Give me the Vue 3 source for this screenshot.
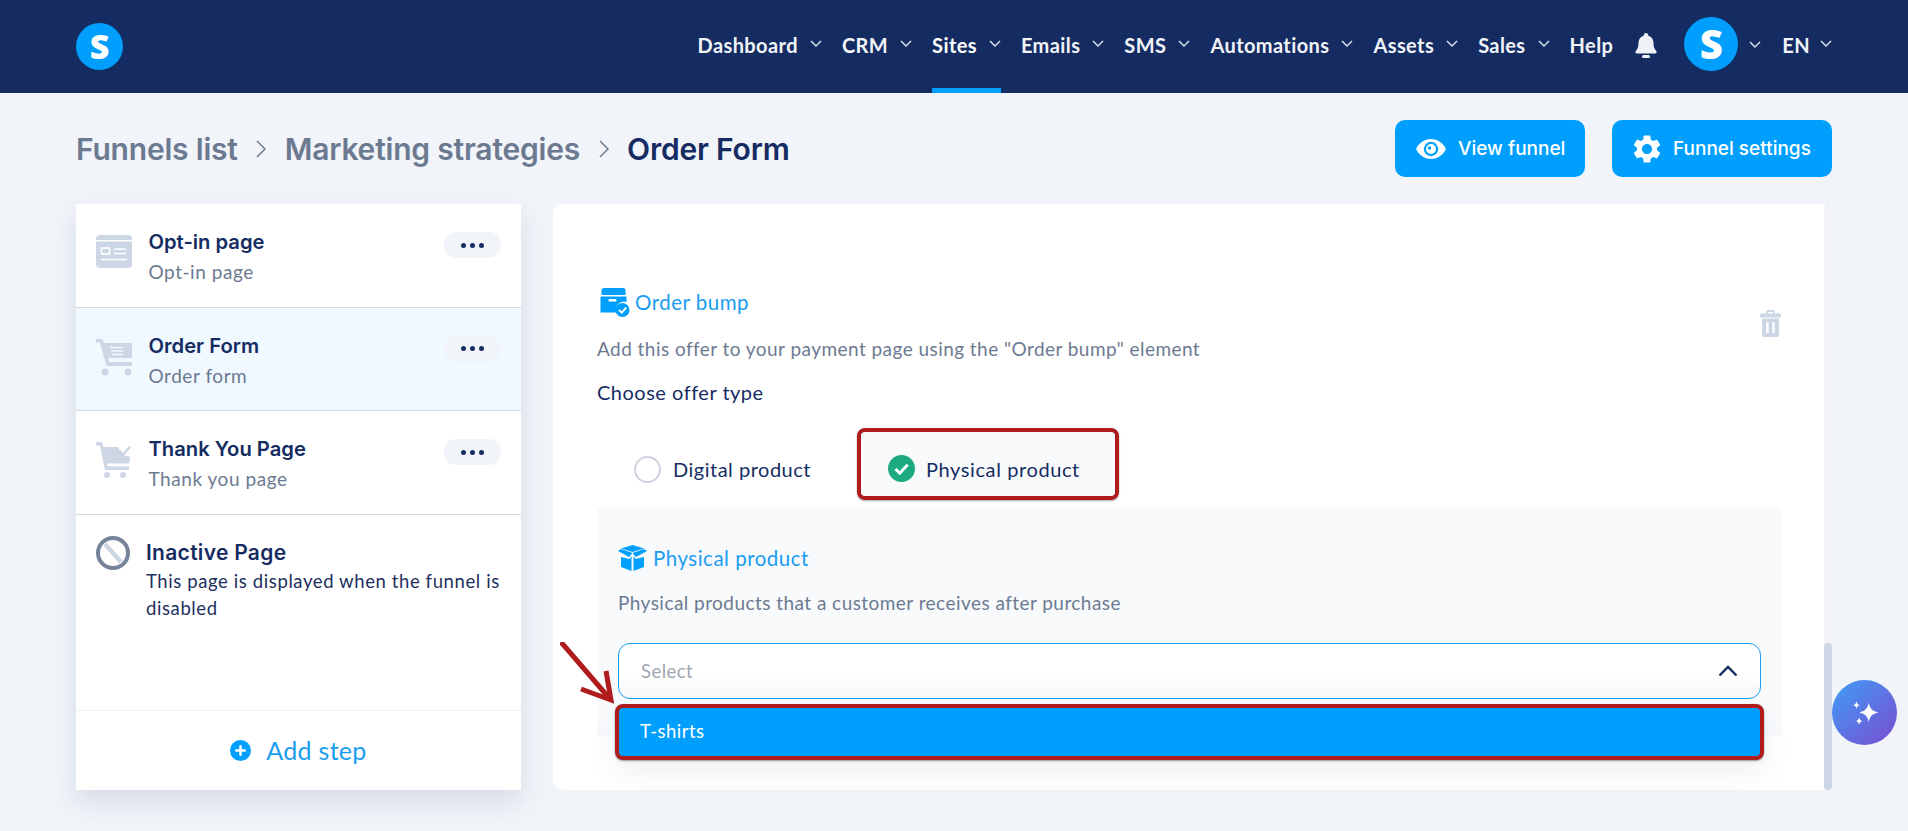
<template>
  <div class="app-shell">
    <header class="topbar">
      <div class="logo">S</div>
      <nav class="nav">
        <a v-for="item in navItems" :key="item.label" class="nav-item" :class="{ active: item.active }">
          <span>{{ item.label }}</span>
          <svg v-if="item.caret" class="caret" viewBox="0 0 12 7"><path d="M1 1l5 5 5-5" /></svg>
        </a>
        <svg class="bell" viewBox="0 0 22 25">
          <path d="M11 0c1.3 0 2.3 1 2.3 2.2v.5c3.300.9 5.200 3.600 5.200 7.100 0 4.400 1 6.400 2.700 8.100.8.9.4 2.600-1.100 2.600H1.900C.4 20.500 0 18.800.8 17.900 2.500 16.200 3.500 14.200 3.500 9.800c0-3.500 1.900-6.200 5.200-7.100v-.5C8.700 1 9.700 0 11 0z" />
          <rect x="7" y="22" width="8" height="3" rx="1.500" />
        </svg>
        <div class="avatar">S</div>
        <svg class="caret avatar-caret" viewBox="0 0 12 7"><path d="M1 1l5 5 5-5" /></svg>
        <a class="nav-item lang">
          <span>EN</span>
          <svg class="caret" viewBox="0 0 12 7"><path d="M1 1l5 5 5-5" /></svg>
        </a>
      </nav>
    </header>

    <main class="page">
      <div class="page-head">
        <div class="crumbs">
          <span class="crumb">Funnels list</span>
          <svg class="crumb-sep" viewBox="0 0 10 18"><path d="M1 1l8 8-8 8" /></svg>
          <span class="crumb">Marketing strategies</span>
          <svg class="crumb-sep" viewBox="0 0 10 18"><path d="M1 1l8 8-8 8" /></svg>
          <span class="crumb current">Order Form</span>
        </div>
        <div class="head-actions">
          <button class="btn-primary view-btn">
            <svg class="eye-icon" viewBox="0 0 30 20">
              <path fill-rule="evenodd" d="M15 0c6.500 0 11.800 4 14.600 9.200.3.500.3 1.100 0 1.600C26.800 16 21.500 20 15 20S3.200 16 .4 10.800c-.3-.5-.3-1.100 0-1.600C3.200 4 8.500 0 15 0zm0 2.800a7.200 7.200 0 1 0 0 14.400 7.200 7.200 0 0 0 0-14.400z" />
              <path fill-rule="evenodd" d="M15 5a5 5 0 1 1 0 10 5 5 0 0 1 0-10zm-1.500 2.200a1.800 1.800 0 1 0 0 3.600 1.800 1.800 0 0 0 0-3.600z" />
            </svg>
            View funnel
          </button>
          <button class="btn-primary settings-btn">
            <svg class="gear-icon" viewBox="2 2 20 20">
              <path d="M19.140 12.940c.04-.3.06-.61.06-.94 0-.32-.02-.64-.07-.94l2.030-1.580a.49.49 0 0 0 .12-.61l-1.920-3.320a.488.488 0 0 0-.59-.22l-2.390.96c-.5-.38-1.030-.7-1.620-.94l-.36-2.540a.484.484 0 0 0-.48-.41h-3.840c-.24 0-.43.17-.47.41l-.36 2.540c-.59.24-1.130.57-1.620.94l-2.390-.96c-.22-.08-.47 0-.59.22L2.740 8.870c-.12.21-.08.47.12.61l2.030 1.580c-.05.3-.09.63-.09.94s.02.64.07.94l-2.030 1.580a.49.49 0 0 0-.12.61l1.920 3.320c.12.22.37.29.59.22l2.390-.96c.5.38 1.030.7 1.620.94l.36 2.540c.05.24.24.41.48.41h3.840c.24 0 .44-.17.47-.41l.36-2.540c.59-.24 1.130-.56 1.620-.94l2.390.96c.22.08.47 0 .59-.22l1.920-3.320c.12-.22.07-.47-.12-.61l-2.010-1.580zM12 15.600c-1.980 0-3.600-1.620-3.600-3.600s1.620-3.600 3.600-3.600 3.600 1.620 3.600 3.600-1.620 3.600-3.600 3.600z" />
            </svg>
            Funnel settings
          </button>
        </div>
      </div>

      <div class="workspace">
        <aside class="sidebar">
          <div class="steps">
            <div v-for="step in steps" :key="step.title" class="step" :class="{ selected: step.selected }">
              <div class="step-icon">
                <svg v-if="step.icon === 'page'" viewBox="0 0 36 33">
                  <rect width="36" height="33" rx="4" fill="#cdd6e4" />
                  <rect y="5" width="36" height="1.500" fill="#fff" />
                  <rect x="5.500" y="13" width="8" height="6" fill="none" stroke="#fff" stroke-width="1.500" />
                  <path d="M18 14h12M18 18.500h12M5 24.500h26" stroke="#fff" stroke-width="1.500" />
                </svg>
                <svg v-else-if="step.icon === 'cart'" viewBox="0 0 36 37">
                  <path d="M0 0h6.500l1.200 4H36v15H12.500l1 4H36v4H10.500L4 3.500H0z" fill="#cdd6e4" />
                  <path d="M14 8.500h13M15 12h12M16 15.500h11" stroke="#f0f9ff" stroke-width="1.500" />
                  <circle cx="9" cy="33" r="3.500" fill="#cdd6e4" />
                  <circle cx="32" cy="33" r="3.500" fill="#cdd6e4" />
                </svg>
                <svg v-else viewBox="0 0 36 37">
                  <path d="M0 0h6l1.500 5h15c1 6 5 9.500 12 9.500l-1.500 7H11l1 3h21v3.500H9L4 3.500H0z" fill="#cdd6e4" />
                  <path d="M23 8.500l4 4 7.500-8" fill="none" stroke="#cdd6e4" stroke-width="2.500" />
                  <circle cx="11" cy="33" r="3" fill="#cdd6e4" />
                  <circle cx="27" cy="33" r="3" fill="#cdd6e4" />
                </svg>
              </div>
              <div class="step-text">
                <div class="step-title">{{ step.title }}</div>
                <div class="step-sub">{{ step.sub }}</div>
              </div>
              <button class="step-menu"><i></i><i></i><i></i></button>
            </div>
            <div class="step inactive">
              <svg class="inactive-icon" viewBox="0 0 34 34">
                <path d="M9 8l16 18" stroke="#cdd6e4" stroke-width="4.500" />
                <circle cx="17" cy="17" r="15" fill="none" stroke="#76849b" stroke-width="4" />
              </svg>
              <div class="step-text">
                <div class="step-title">Inactive Page</div>
                <div class="inactive-desc">This page is displayed when the funnel is disabled</div>
              </div>
            </div>
          </div>
          <div class="add-step">
            <svg class="plus-icon" viewBox="0 0 22 22">
              <circle cx="11" cy="11" r="11" fill="#019ffd" />
              <path d="M11 6.500v9M6.500 11h9" stroke="#fff" stroke-width="2.600" stroke-linecap="round" />
            </svg>
            <span>Add step</span>
          </div>
        </aside>

        <section class="panel">
          <div class="panel-scroll">
            <div class="offer-head">
              <svg class="bump-icon" viewBox="0 0 29 29">
                <path d="M1 2.500A2.500 2.500 0 0 1 3.500 0h19A2.500 2.500 0 0 1 25 2.500V7H1z" fill="#019ffd" />
                <path d="M0 8.500h26V14a8 8 0 0 0-10 10.500H0z" fill="#019ffd" />
                <rect x="8" y="11" width="8" height="2.500" rx="1" fill="#fff" />
                <circle cx="22" cy="22" r="7" fill="#019ffd" />
                <path d="M18.500 22l2.700 2.600 4.400-5" fill="none" stroke="#fff" stroke-width="2" />
              </svg>
              <span class="section-title">Order bump</span>
              <svg class="trash-icon" viewBox="0 0 21 27">
                <path d="M7 3.500V2a1 1 0 0 1 1-1h5a1 1 0 0 1 1 1v1.500" fill="none" stroke="#cdd6e4" stroke-width="1.800" />
                <rect y="3.500" width="21" height="4" rx="1" fill="#cdd6e4" />
                <path d="M2 8.500h17V25a2 2 0 0 1-2 2H4a2 2 0 0 1-2-2z" fill="#cdd6e4" />
                <path d="M7.500 12v11M13.500 12v11" stroke="#fff" stroke-width="2.200" />
              </svg>
            </div>
            <p class="hint offer-hint">Add this offer to your payment page using the "Order bump" element</p>
            <p class="offer-label">Choose offer type</p>

            <div class="offer-types">
              <label class="offer-type digital">
                <span class="radio"></span>
                Digital product
              </label>
              <label class="offer-type physical">
                <svg class="radio-check" viewBox="0 0 27 27">
                  <circle cx="13.500" cy="13.500" r="13.500" fill="#1bab7e" />
                  <path d="M7.500 14l4.200 4.200 8-8.400" fill="none" stroke="#fff" stroke-width="3" />
                </svg>
                Physical product
              </label>
            </div>

            <div class="product-box">
              <div class="product-head">
                <svg class="box-icon" viewBox="0 0 29 26">
                  <path d="M14.500 0L26 3.500 14.500 7 3 3.500z" fill="#019ffd" />
                  <path d="M0 6l3-2 11.500 4L11 12z M29 6l-3-2-11.500 4L18 12z" fill="#019ffd" />
                  <path d="M3 12l8.500 2 2-3v15L3 22z M26 12l-8.500 2-2-3v15L26 22z" fill="#019ffd" />
                </svg>
                <span class="section-title">Physical product</span>
              </div>
              <p class="hint product-hint">Physical products that a customer receives after purchase</p>

              <div class="select-wrap">
                <div class="select-box">
                  <span>Select</span>
                  <svg class="select-caret" viewBox="0 0 20 12"><path d="M1.500 10.500L10 2l8.500 8.500" /></svg>
                </div>
                <div class="select-option">T-shirts</div>
                <svg class="arrow" viewBox="0 0 56 64">
                  <path d="M1 0l49 57" />
                  <path d="M21 47l30 11-5-29" />
                </svg>
              </div>
            </div>
          </div>
          <div class="scrollbar"><div class="thumb"></div></div>
        </section>

        <button class="assist">
          <svg viewBox="0 0 30 30">
            <path d="M18.500 5.500c1 5.500 3.500 8 9 9-5.500 1-8 3.500-9 9-1-5.500-3.500-8-9-9 5.500-1 8-3.500 9-9z" />
            <path d="M7 4c.4 2.300 1.300 3.200 3.600 3.600C8.300 8 7.400 8.900 7 11.200c-.4-2.300-1.300-3.200-3.600-3.600C5.700 7.200 6.600 6.300 7 4z" />
            <path d="M9.500 19c.4 2.300 1.300 3.200 3.600 3.600-2.300.4-3.200 1.300-3.600 3.600-.4-2.300-1.300-3.200-3.600-3.600 2.300-.4 3.200-1.300 3.600-3.600z" />
          </svg>
        </button>
      </div>
    </main>
  </div>
</template>

<script setup>
const navItems = [
  { label: 'Dashboard', caret: true },
  { label: 'CRM', caret: true },
  { label: 'Sites', caret: true, active: true },
  { label: 'Emails', caret: true },
  { label: 'SMS', caret: true },
  { label: 'Automations', caret: true },
  { label: 'Assets', caret: true },
  { label: 'Sales', caret: true },
  { label: 'Help', caret: false }
]

const steps = [
  { title: 'Opt-in page', sub: 'Opt-in page', icon: 'page' },
  { title: 'Order Form', sub: 'Order form', icon: 'cart', selected: true },
  { title: 'Thank You Page', sub: 'Thank you page', icon: 'thanks' }
]
</script>

<style>
html, body { margin: 0; background: #f1f4f9; overflow: hidden; }
</style>

<style scoped>
.app-shell { height: 831px; background: #f1f4f9; font-family: Lato, "Open Sans", sans-serif; color: #152c63; }
.topbar { height: 93px; background: #152c63; display: flex; align-items: center; justify-content: space-between; padding: 0 76px; box-sizing: border-box; }
.logo { width: 47px; height: 47px; border-radius: 50%; background: #019ffd; color: #fff; font: 800 34px/47px "Open Sans", sans-serif; text-align: center; }
.nav { display: flex; align-items: center; height: 93px; }
.nav-item { display: flex; align-items: center; gap: 12px; height: 93px; box-sizing: border-box; margin-right: 20px; padding-bottom: 3px; color: #f1f4f9; font-weight: 700; font-size: 20px; letter-spacing: 0.4px; position: relative; }
.nav-item.active { color: #fff; }
.nav-item.active::after { content: ""; position: absolute; left: 0; right: 0; bottom: 0; height: 5px; background: #019ffd; }
.caret { width: 12px; height: 7px; fill: none; stroke: #dfe6f0; stroke-width: 1.400; margin-top: -3px; }
.avatar-caret { margin-left: 11px; margin-right: 21px; margin-top: -5px; }
.bell { width: 22px; height: 25px; fill: #eef1f6; margin-left: 2px; margin-right: 27px; margin-top: -3px; }
.avatar { width: 54px; height: 54px; border-radius: 50%; background: #019ffd; color: #fff; font: 800 40px/54px "Open Sans", sans-serif; text-align: center; margin-top: -5px; }
.nav-item.lang { margin-right: 0; gap: 10px; }

.page { padding: 0 76px; position: relative; }
.page-head { height: 111px; display: flex; align-items: center; justify-content: space-between; box-sizing: border-box; }
.crumbs { display: flex; align-items: center; font-family: Inter, sans-serif; font-size: 30px; font-weight: 600; color: #6c7a91; letter-spacing: -0.2px; }
.crumb.current { color: #152c63; }
.crumb-sep { width: 10px; height: 18px; fill: none; stroke: #6c7a91; stroke-width: 1.500; margin: 0 18.500px; }
.head-actions { display: flex; gap: 27px; }
.btn-primary { height: 57px; border: none; border-radius: 10px; background: #019ffd; color: #fff; font-family: Inter, sans-serif; font-size: 19px; font-weight: 500; display: flex; align-items: center; padding: 0 0 0 21px; white-space: nowrap; }
.view-btn { width: 190px; gap: 12px; }
.settings-btn { width: 220px; gap: 12px; }
.eye-icon { width: 30px; height: 20px; fill: #fff; flex: none; }
.gear-icon { width: 28px; height: 28px; fill: #fff; flex: none; }

.workspace { display: grid; grid-template-columns: 445px 1fr; gap: 32px; height: 586px; }
.sidebar { background: #fff; display: flex; flex-direction: column; box-shadow: 0 12px 24px rgba(60, 75, 110, 0.14); }
.steps { flex: 1; }
.step { height: 103.600px; box-sizing: border-box; border-bottom: 1.500px solid #d3d9e2; padding: 26px 20px 0; display: flex; }
.step.selected { background: #f0f9ff; }
.step-icon { width: 36px; margin-right: 16.500px; padding-top: 5px; flex: none; }
.step-icon svg { display: block; width: 36px; }
.step-text { flex: 1; }
.step-title { font-family: Inter, sans-serif; font-size: 20.200px; font-weight: 600; line-height: 24px; color: #152c63; }
.step-sub { font-size: 19px; line-height: 24px; margin-top: 6px; color: #6c7a91; letter-spacing: 0.55px; }
.step-menu { width: 57px; height: 26px; border: none; border-radius: 12px; background: #f1f4f9; display: flex; align-items: center; justify-content: center; gap: 4px; padding: 0; margin-top: 2px; }
.step-menu i { width: 5px; height: 5px; border-radius: 50%; background: #152c63; }
.step.inactive { border-bottom: none; padding-top: 21px; height: auto; }
.inactive-icon { width: 34px; height: 34px; flex: none; margin-right: 17px; }
.step.inactive .step-title { margin-top: 5.500px; margin-left: -1px; font-size: 21px; letter-spacing: 0.3px; }
.inactive-desc { font-size: 18.500px; line-height: 27px; color: #1d2f5f; letter-spacing: 0.6px; margin-top: 3px; margin-left: -1px; }
.add-step { height: 80px; flex: none; border-top: 1px solid #eef1f5; box-sizing: border-box; display: flex; align-items: center; justify-content: center; gap: 15px; color: #1a9df0; font-size: 25px; letter-spacing: 0.3px; padding-bottom: 1px; }
.plus-icon { width: 21px; height: 21px; }

.panel { background: #fff; border-radius: 10px 0 10px 10px; display: flex; overflow: visible; }
.panel-scroll { flex: 1; padding: 84px 42px 0 44px; position: relative; min-width: 0; }
.scrollbar { width: 8px; background: #f1f3f7; border-radius: 4px; display: flex; flex-direction: column; flex: none; }
.thumb { margin-top: auto; height: 147px; background: #cdd6e4; border-radius: 4px; }
.offer-head { display: flex; align-items: center; height: 28px; padding-left: 3px; gap: 5px; position: relative; }
.bump-icon { width: 30px; height: 29px; flex: none; }
.section-title { color: #1a9df0; font-size: 20.500px; letter-spacing: 0.5px; }
.trash-icon { width: 21px; height: 27px; position: absolute; right: 1px; top: 22px; }
.hint { margin: 0; font-size: 19px; color: #6c7a91; letter-spacing: 0.45px; line-height: 24px; }
.offer-hint { margin-top: 21px; }
.offer-label { margin: 19px 0 0; font-size: 20px; line-height: 24px; color: #152c63; letter-spacing: 0.5px; }
.offer-types { display: flex; margin-top: 24px; }
.offer-type { display: flex; align-items: center; gap: 12px; height: 72px; box-sizing: border-box; padding-top: 10px; font-size: 20px; letter-spacing: 0.5px; color: #152c63; }
.offer-type.digital { padding-left: 37px; width: 260px; }
.offer-type.physical { width: 262px; padding-left: 27px; padding-top: 9px; gap: 11px; letter-spacing: 0.6px; border: 4px solid #b01c1c; border-radius: 8px; background: #f8fafc; box-shadow: 0 1px 2px rgba(0,0,0,.35); }
.radio { width: 27px; height: 27px; box-sizing: border-box; border: 2px solid #cdd3de; border-radius: 50%; background: #fff; }
.radio-check { width: 27px; height: 27px; }
.product-box { background: #f8fafc; height: 230px; margin-top: 7px; padding: 38px 21px 0; box-sizing: border-box; }
.product-head { display: flex; align-items: center; gap: 6px; height: 26px; }
.box-icon { width: 29px; height: 26px; flex: none; }
.product-hint { margin-top: 20px; }
.select-wrap { position: relative; margin-top: 28px; }
.select-box { height: 56px; box-sizing: border-box; border: 1px solid #1a9df0; border-radius: 12px; background: linear-gradient(#fff 55%, #f6f7f9); display: flex; align-items: center; justify-content: space-between; padding: 0 22px 1px; font-size: 18.500px; letter-spacing: 0.45px; color: #a0a6b0; }
.select-caret { width: 20px; height: 12px; fill: none; stroke: #152c63; stroke-width: 2.400; }
.select-option { position: absolute; left: -3px; right: -3px; top: 61px; height: 56px; box-sizing: border-box; border: 4px solid #b01c1c; border-radius: 8px; background: #019ffd; color: #fff; font-size: 18.500px; letter-spacing: 0.45px; line-height: 46px; padding-left: 21px; box-shadow: 0 1px 2px rgba(0,0,0,.4), 0 14px 28px rgba(60, 75, 110, 0.08); }
.arrow { position: absolute; left: -58px; top: -1px; width: 56px; height: 64px; fill: none; stroke: #b01c1c; stroke-width: 5; }
.assist { position: absolute; left: 1832px; top: 587px; width: 65px; height: 65px; padding: 0; border: none; border-radius: 50%; background: linear-gradient(135deg, #3f9ef7, #7a4ccf); display: flex; align-items: center; justify-content: center; }
.assist svg { width: 32px; height: 32px; fill: #fff; }
</style>
